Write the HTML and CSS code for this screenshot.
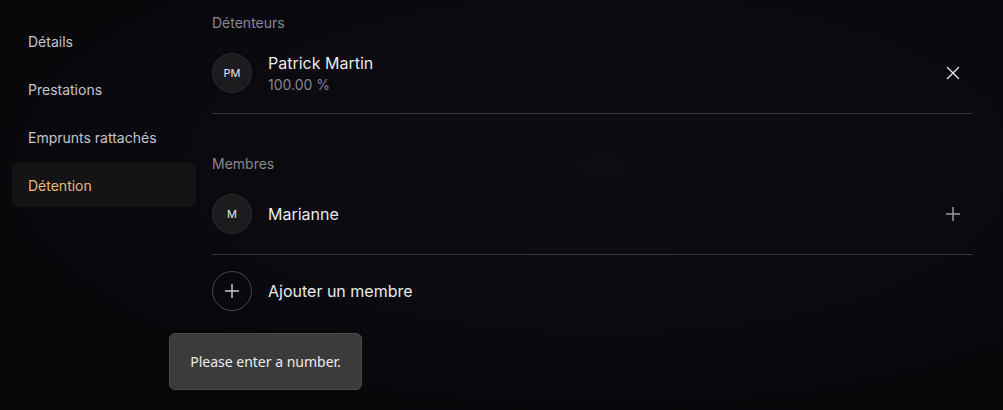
FILE: index.html
```html
<!DOCTYPE html>
<html lang="fr">
<head>
<meta charset="utf-8">
<title>Détention</title>
<link rel="stylesheet" href="styles.css">
</head>
<body>
<div class="page">
  <nav class="sidebar">
    <a class="nav-item">Détails</a>
    <a class="nav-item">Prestations</a>
    <a class="nav-item">Emprunts rattachés</a>
    <a class="nav-item active">Détention</a>
  </nav>
  <main class="content">
    <section class="group">
      <h2 class="group-title">Détenteurs</h2>
      <div class="row bordered holder">
        <div class="avatar">PM</div>
        <div class="info">
          <div class="name">Patrick Martin</div>
          <div class="sub">100.00 %</div>
        </div>
        <button class="icon-btn" aria-label="Retirer">
          <svg width="14" height="14" viewBox="0 0 14 14"><path d="M1.5 1.5 12.5 12.5M12.5 1.5 1.5 12.5" stroke="#e6e6ea" stroke-width="1.4" stroke-linecap="round"/></svg>
        </button>
      </div>
    </section>
    <section class="group second">
      <h2 class="group-title">Membres</h2>
      <div class="row bordered">
        <div class="avatar">M</div>
        <div class="info">
          <div class="name">Marianne</div>
        </div>
        <button class="icon-btn" aria-label="Ajouter">
          <svg width="16" height="16" viewBox="0 0 16 16"><path d="M8 1V15M1 8H15" stroke="#9a9aa0" stroke-width="1.5"/></svg>
        </button>
      </div>
      <div class="row add">
        <div class="avatar outline">
          <svg width="16" height="16" viewBox="0 0 16 16"><path d="M8 1V15M1 8H15" stroke="#c8c8cc" stroke-width="1.5"/></svg>
        </div>
        <div class="info">
          <div class="name">Ajouter un membre</div>
        </div>
      </div>
    </section>
  </main>
  <div class="tooltip">Please enter a number.</div>
</div>
</body>
</html>
```

FILE: styles.css
```css
* { box-sizing: border-box; }
html, body {
  margin: 0;
  height: 100%;
}
body {
  background: radial-gradient(ellipse at 60% 40%, #0d0d14 0%, #09090d 60%, #070709 100%);
  font-family: Inter, "Noto Sans", sans-serif;
  color: #e8e8ec;
  overflow: hidden;
}
.page {
  position: relative;
  display: flex;
  gap: 16px;
  padding: 13px 30px 0 12px;
  height: 410px;
}
.sidebar {
  width: 184px;
  flex: none;
  display: flex;
  flex-direction: column;
  gap: 4px;
  padding-top: 6px;
}
.nav-item {
  display: flex;
  align-items: center;
  height: 44px;
  padding: 0 16px;
  border-radius: 6px;
  font-size: 14px;
  color: #c4c4cb;
}
.nav-item.active {
  background: #141417;
  color: #e7b675;
}
.content {
  flex: 1;
  display: flex;
  flex-direction: column;
}
.group-title {
  margin: 0;
  font-size: 14px;
  font-weight: 400;
  line-height: 20px;
  color: #88888f;
}
.group.second { margin-top: 40px; }
.row {
  display: flex;
  align-items: center;
  gap: 16px;
  padding: 20px 0;
}
.row.holder { padding: 18px 0; }
.row.bordered { border-bottom: 1px solid #34343a; }
.row.add { padding: 16px 0; }
.avatar {
  width: 40px;
  height: 40px;
  flex: none;
  border-radius: 50%;
  background: #1c1c1f;
  border: 1px solid #2c2c30;
  display: flex;
  align-items: center;
  justify-content: center;
  font-size: 11px;
  color: #e2e2e6;
}
.avatar.outline {
  background: transparent;
  border-color: #45454b;
}
.info {
  flex: 1;
  display: flex;
  flex-direction: column;
}
.name {
  font-size: 16px;
  line-height: 24px;
  color: #e9e9ed;
}
.sub {
  font-size: 14px;
  line-height: 20px;
  color: #85858c;
}
.icon-btn {
  width: 40px;
  height: 40px;
  border: 0;
  background: transparent;
  display: flex;
  align-items: center;
  justify-content: center;
  padding: 0;
}
.tooltip {
  position: absolute;
  left: 169px;
  top: 333px;
  width: 193px;
  height: 57px;
  display: flex;
  align-items: center;
  justify-content: center;
  background: #3b3b3c;
  border: 1px solid #4a4a4b;
  border-radius: 6px;
  font-family: "Noto Sans", "DejaVu Sans", sans-serif;
  font-size: 14px;
  color: #ececec;
}
```
